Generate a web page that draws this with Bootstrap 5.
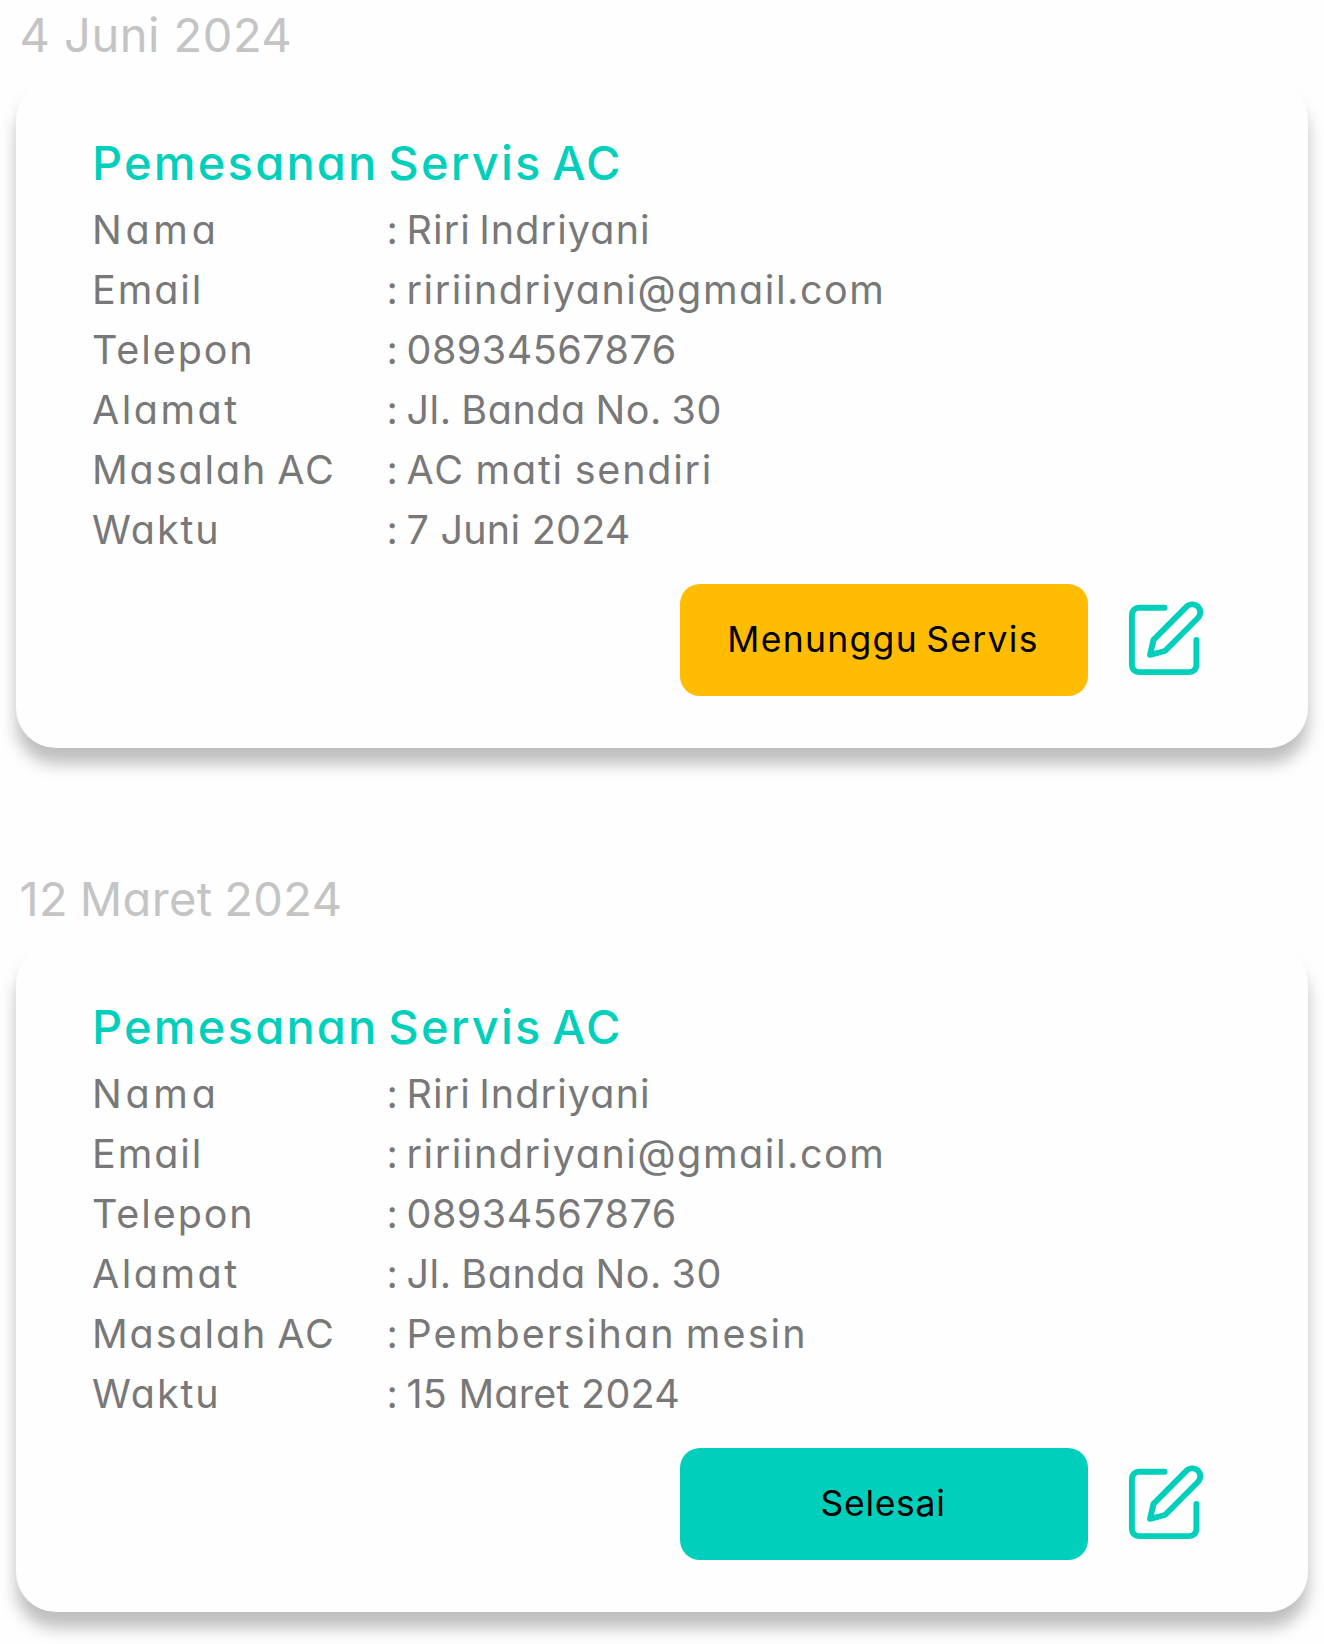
<!DOCTYPE html>
<html lang="id">
<head>
<meta charset="utf-8">
<meta name="viewport" content="width=device-width, initial-scale=1">
<title>Riwayat Pemesanan</title>
<link rel="stylesheet" href="https://cdn.jsdelivr.net/npm/bootstrap@5.3.0/dist/css/bootstrap.min.css">
<style>
  :root { --teal: #00d0bb; --amber: #ffbc00; }
  body {
    background: #fefefe;
    font-family: Inter, "Open Sans", sans-serif;
    font-feature-settings: "cv11";
    overflow-x: hidden;
  }
  .history { width: 1324px; padding: 0 16px; }
  .entry { height: 864px; }
  .entry:last-child { height: 780px; }
  .entry-date {
    height: 80px; padding-left: 3.5px;
    font-size: 47px; line-height: 69px; letter-spacing: .5px; color: #c4c4c4;
  }
  .entry-date-long { letter-spacing: .4px; word-spacing: -2px; }
  .order-card {
    height: 668px; border: 0; border-radius: 40px; background: #fefefe;
    box-shadow: 0 16px 16px rgba(0, 0, 0, .25);
    padding: 47px 0 0 76px;
  }
  .order-title {
    font-size: 47px; line-height: 72px; font-weight: 500;
    letter-spacing: 2.2px; word-spacing: -5px;
    color: var(--teal); margin-bottom: 1px;
  }
  .order-data { font-size: 39.5px; line-height: 60px; color: #787878; }
  .order-data dt { width: 294.5px; font-weight: 400; letter-spacing: 1.9px; word-spacing: -3px; }
  .order-data dd { white-space: nowrap; }
  .colon { width: 20px; }
  .order-data .t-nama { letter-spacing: 3.7px; }
  .order-data .t-alamat { letter-spacing: 2.5px; }
  .v-nama { letter-spacing: 1.1px; word-spacing: -4px; }
  .v-email { letter-spacing: 1.55px; }
  .v-telp { letter-spacing: .5px; }
  .v-alamat { letter-spacing: .55px; word-spacing: -2px; }
  .v-mati { letter-spacing: 1.75px; word-spacing: -2px; }
  .v-bersih { letter-spacing: 2.1px; word-spacing: -3px; }
  .v-waktu { letter-spacing: .25px; }
  .order-actions { margin-top: 24px; padding-right: 103px; gap: 39px; }
  .status-btn {
    width: 408px; height: 112px; border: 0; border-radius: 20px; padding: 0 2px 0 0;
    font-size: 35.5px; line-height: 54px; letter-spacing: 1.3px; word-spacing: -3px; color: #000;
  }
  .status-wait { background: var(--amber); }
  .status-done { background: var(--teal); letter-spacing: .7px; }
  .edit-btn { width: 78px; height: 78px; line-height: 0; }
</style>
<script src="https://cdn.jsdelivr.net/npm/bootstrap@5.3.0/dist/js/bootstrap.bundle.min.js"></script>
</head>
<body>
<svg class="d-none" aria-hidden="true">
  <symbol id="edit" viewBox="0 1 78 78">
    <g fill="none" stroke="#00d0bb" stroke-width="5.9" stroke-linecap="round" stroke-linejoin="round">
      <path d="M37.6 7.8H11.7A6.8 6.8 0 0 0 4.9 14.6V65.3A6.8 6.8 0 0 0 11.7 72.1H62.6A6.8 6.8 0 0 0 69.4 65.3V40"/>
      <path d="M26.5 39.8L59.6 6.7A7.9 7.9 0 0 1 70.9 18L38 51L23 54.8Z"/>
    </g>
  </symbol>
</svg>
<main class="history">
  <section class="entry">
    <div class="entry-date">4 Juni 2024</div>
    <article class="card order-card">
      <h2 class="order-title">Pemesanan Servis AC</h2>
      <dl class="order-data mb-0">
        <div class="d-flex"><dt class="t-nama">Nama</dt><dd class="d-flex mb-0"><span class="colon">:</span><span class="v-nama">Riri Indriyani</span></dd></div>
        <div class="d-flex"><dt>Email</dt><dd class="d-flex mb-0"><span class="colon">:</span><span class="v-email">ririindriyani@gmail.com</span></dd></div>
        <div class="d-flex"><dt>Telepon</dt><dd class="d-flex mb-0"><span class="colon">:</span><span class="v-telp">08934567876</span></dd></div>
        <div class="d-flex"><dt class="t-alamat">Alamat</dt><dd class="d-flex mb-0"><span class="colon">:</span><span class="v-alamat">Jl. Banda No. 30</span></dd></div>
        <div class="d-flex"><dt>Masalah AC</dt><dd class="d-flex mb-0"><span class="colon">:</span><span class="v-mati">AC mati sendiri</span></dd></div>
        <div class="d-flex"><dt>Waktu</dt><dd class="d-flex mb-0"><span class="colon">:</span><span class="v-waktu">7 Juni 2024</span></dd></div>
      </dl>
      <div class="order-actions d-flex justify-content-end align-items-center">
        <button type="button" class="btn status-btn status-wait">Menunggu Servis</button>
        <button type="button" class="btn p-0 border-0 edit-btn" aria-label="Ubah"><svg width="78" height="78"><use href="#edit"/></svg></button>
      </div>
    </article>
  </section>
  <section class="entry">
    <div class="entry-date entry-date-long">12 Maret 2024</div>
    <article class="card order-card">
      <h2 class="order-title">Pemesanan Servis AC</h2>
      <dl class="order-data mb-0">
        <div class="d-flex"><dt class="t-nama">Nama</dt><dd class="d-flex mb-0"><span class="colon">:</span><span class="v-nama">Riri Indriyani</span></dd></div>
        <div class="d-flex"><dt>Email</dt><dd class="d-flex mb-0"><span class="colon">:</span><span class="v-email">ririindriyani@gmail.com</span></dd></div>
        <div class="d-flex"><dt>Telepon</dt><dd class="d-flex mb-0"><span class="colon">:</span><span class="v-telp">08934567876</span></dd></div>
        <div class="d-flex"><dt class="t-alamat">Alamat</dt><dd class="d-flex mb-0"><span class="colon">:</span><span class="v-alamat">Jl. Banda No. 30</span></dd></div>
        <div class="d-flex"><dt>Masalah AC</dt><dd class="d-flex mb-0"><span class="colon">:</span><span class="v-bersih">Pembersihan mesin</span></dd></div>
        <div class="d-flex"><dt>Waktu</dt><dd class="d-flex mb-0"><span class="colon">:</span><span class="v-waktu">15 Maret 2024</span></dd></div>
      </dl>
      <div class="order-actions d-flex justify-content-end align-items-center">
        <button type="button" class="btn status-btn status-done">Selesai</button>
        <button type="button" class="btn p-0 border-0 edit-btn" aria-label="Ubah"><svg width="78" height="78"><use href="#edit"/></svg></button>
      </div>
    </article>
  </section>
</main>
</body>
</html>
